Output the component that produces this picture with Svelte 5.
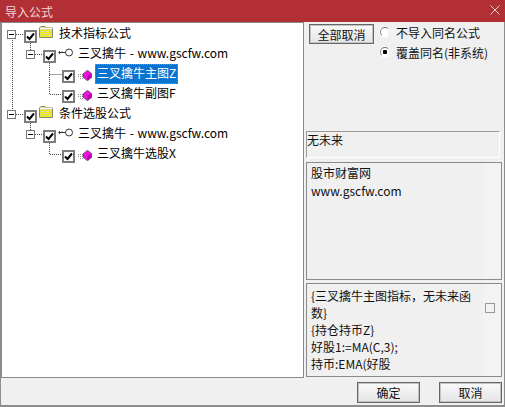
<script>
  const rows = [
    { depth: 0, kind: 'folder', label: '技术指标公式', expander: true },
    { depth: 1, kind: 'key', label: '三叉擒牛 - www.gscfw.com', expander: true },
    { depth: 2, kind: 'gem', label: '三叉擒牛主图Z', selected: true },
    { depth: 2, kind: 'gem', label: '三叉擒牛副图F' },
    { depth: 0, kind: 'folder', label: '条件选股公式', expander: true },
    { depth: 1, kind: 'key', label: '三叉擒牛 - www.gscfw.com', expander: true },
    { depth: 2, kind: 'gem', label: '三叉擒牛选股X' }
  ];
  let overwrite = $state(true);
</script>

<div class="window">
  <header class="titlebar">
    <span class="title">导入公式</span>
    <svg class="close" width="10" height="10" viewBox="0 0 10 10"><path d="M0.5 0.5 9.5 9.5M9.5 0.5 0.5 9.5" stroke="#e9cfd0" fill="none" /></svg>
  </header>

  <div class="main">
    <div class="tree">
      <svg class="lines" width="110" height="150" viewBox="0 0 110 150">
        <path d="M10.5 15V87M14 11.5H22M28.5 20V27M33 31.5H41M47.5 40V71.5H60M47.5 51.5H60M14 91.5H22M28.5 100V107M33 111.5H41M47.5 120V131.5H60" stroke="#444" stroke-dasharray="1 1" fill="none" />
      </svg>
      {#each rows as row}
        <div class="row depth{row.depth}">
          {#if row.expander}
            <span class="expander"><i></i></span>
          {/if}
          <span class="check">
            <svg width="9" height="9" viewBox="0 0 9 9"><path d="M1 4.5 3.5 7 8 1.5" stroke="#000" stroke-width="2" fill="none" /></svg>
          </span>
          {#if row.kind === 'folder'}
            <svg class="icon folder" width="14" height="12" viewBox="0 0 14 12">
              <defs>
                <pattern id="dither" width="2" height="2" patternUnits="userSpaceOnUse">
                  <rect width="2" height="2" fill="#f6f200" />
                  <rect width="1" height="1" fill="#d6d690" />
                  <rect x="1" y="1" width="1" height="1" fill="#d6d690" />
                </pattern>
              </defs>
              <path d="M0.5 11.5V2L2 0.5H6L7.5 2H13.5V11.5Z" fill="url(#dither)" stroke="#8a8a70" />
              <path d="M1 2.5H13" stroke="#fff" fill="none" />
            </svg>
          {:else if row.kind === 'key'}
            <svg class="icon key" width="15" height="9" viewBox="0 0 15 9">
              <circle cx="11" cy="4.5" r="3.5" fill="#fff" stroke="#333" />
              <path d="M0.5 4.5H7.5M1.5 3V6M4 3.5V4" stroke="#333" fill="none" />
            </svg>
          {:else}
            <svg class="icon gem" width="15" height="11" viewBox="0 0 15 11">
              <path d="M1 4.5H6M1 6.5H6M3 8.5H6" stroke="#888" stroke-dasharray="1 1" fill="none" />
              <path d="M10.5 0.2 15 4V7L10.5 10.8 6 7V4Z" fill="#f010e0" stroke="#503060" stroke-width="0.7" />
              <path d="M10.5 5.5 14.6 4V6.8L10.5 10.2Z" fill="#b000a8" />
            </svg>
          {/if}
          <span class="label" class:selected={row.selected}>{row.label}</span>
        </div>
      {/each}
    </div>

    <div class="side">
      <div class="options">
        <button class="btn all">全部取消</button>
        <div class="radios">
          <label class="radio"><input type="radio" name="same" checked={!overwrite} onchange={() => (overwrite = false)} /><span>不导入同名公式</span></label>
          <label class="radio"><input type="radio" name="same" checked={overwrite} onchange={() => (overwrite = true)} /><span>覆盖同名(非系统)</span></label>
        </div>
      </div>
      <div class="future">无未来</div>
      <div class="box info">
        <div class="text">
          <div>股市财富网</div>
          <div>www.gscfw.com</div>
        </div>
      </div>
      <div class="box code">
        <div class="text">
          <div>{'{'}三叉擒牛主图指标，无未来函数{'}'}</div>
          <div>{'{'}持仓持币Z{'}'}</div>
          <div>好股1:=MA(C,3);</div>
          <div>持币:EMA(好股</div>
        </div>
        <span class="small-check"></span>
      </div>
    </div>
  </div>

  <footer class="footer">
    <button class="btn ok">确定</button>
    <button class="btn cancel">取消</button>
  </footer>
</div>

<style>
  :global(body) {
    margin: 0;
    background: #f0f0f0;
  }
  .window {
    width: 505px;
    height: 407px;
    box-sizing: border-box;
    border: 1px solid #8d8d8d;
    border-top: none;
    border-bottom-width: 2px;
    background: #f0f0f0;
    font-family: "Noto Sans CJK SC", "Liberation Sans", sans-serif;
    font-size: 12px;
    color: #111;
    display: flex;
    flex-direction: column;
  }
  .titlebar {
    height: 22px;
    flex: none;
    margin: 0 -1px;
    background: #b12f35;
    display: flex;
    align-items: center;
    justify-content: space-between;
    padding: 0 5px;
    color: #f0d8d8;
  }
  .close {
    margin-top: -2px;
  }
  .main {
    height: 356px;
    flex: none;
    display: flex;
  }
  .tree {
    position: relative;
    width: 303px;
    flex: none;
    box-sizing: border-box;
    border: 1px solid #8a8a8a;
    background: #fff;
    padding-top: 1px;
  }
  .lines {
    position: absolute;
    left: 0;
    top: 0;
    pointer-events: none;
  }
  .row {
    position: relative;
    height: 20px;
    display: flex;
    align-items: center;
    color: #000;
  }
  .depth0 { padding-left: 5px; }
  .depth1 { padding-left: 24px; }
  .depth2 { padding-left: 60px; }
  .expander {
    width: 9px;
    height: 9px;
    box-sizing: border-box;
    border: 1px solid #777;
    background: #fff;
    margin-right: 8px;
    display: flex;
    align-items: center;
    justify-content: center;
  }
  .expander i {
    width: 5px;
    height: 1px;
    background: #000;
  }
  .check {
    width: 13px;
    height: 13px;
    flex: none;
    box-sizing: border-box;
    border: 2px solid #7d7d7d;
    background: #fff;
    align-self: flex-start;
    margin-top: 6px;
    display: flex;
    align-items: center;
    justify-content: center;
  }
  .icon {
    flex: none;
    align-self: flex-start;
    margin-left: 2px;
  }
  .folder { margin-top: 2px; }
  .key { margin-top: 4px; }
  .gem { margin-top: 6px; }
  .label {
    margin-left: 5px;
    line-height: 18px;
    padding-bottom: 2px;
    word-spacing: 1px;
  }
  .depth0 .label { margin-left: 6px; }
  .depth2 .label {
    margin-left: 3px;
    padding-left: 2px;
    padding-right: 2px;
  }
  .label.selected {
    background: #0a74d0;
    color: #fff;
    outline: 1px dotted #d08020;
    outline-offset: -1px;
  }
  .side {
    flex: 1;
    min-width: 0;
    display: flex;
    flex-direction: column;
  }
  .options {
    height: 109px;
    flex: none;
    display: flex;
    padding-left: 5px;
    gap: 6px;
  }
  .btn {
    font: inherit;
    color: #111;
    background: linear-gradient(#fafafa, #e4e4e4);
    border: 1px solid #666;
    box-shadow: inset 0 0 0 1px #c4c4c4;
    padding: 0;
  }
  .all {
    width: 65px;
    height: 20px;
    margin-top: 2px;
  }
  .radios {
    display: flex;
    flex-direction: column;
  }
  .radio {
    display: flex;
    align-items: center;
    height: 20px;
    gap: 6px;
  }
  .radio input {
    appearance: none;
    width: 10px;
    height: 10px;
    box-sizing: border-box;
    margin: 0;
    flex: none;
    border-radius: 50%;
    border: 1px solid;
    border-color: #777 #e8e8e8 #fff #888;
    background: #fff;
    box-shadow: 0 0 0 1px #f8f8f8;
  }
  .radio input:checked {
    background: radial-gradient(circle, #000 0 2px, #fff 2.5px);
  }
  .future {
    height: 27px;
    width: 194px;
    flex: none;
    box-sizing: border-box;
    border: 1px solid #9a9a9a;
    border-bottom-color: #fff;
    border-right-color: #fff;
    line-height: 16px;
    margin-left: 2px;
  }
  .box {
    box-sizing: border-box;
    width: 196px;
    flex: none;
    margin-left: 2px;
    border: 1px solid #8a8a8a;
    background: #f4f3f1;
    display: flex;
    align-items: flex-start;
  }
  .text {
    width: 176px;
    height: 100%;
    flex: none;
    box-sizing: border-box;
    background: #f0f0f0;
    padding: 0 8px 0 4px;
    overflow: hidden;
  }
  .info {
    height: 118px;
    margin-top: 4px;
    line-height: 18px;
  }
  .info .text {
    padding-top: 1px;
  }
  .code {
    height: 94px;
    margin-top: 3px;
    line-height: 17px;
  }
  .code .text {
    padding-top: 3px;
  }
  .small-check {
    width: 10px;
    height: 10px;
    box-sizing: border-box;
    border: 1px solid #999;
    margin: 19px 0 0 2px;
    flex: none;
  }
  .footer {
    flex: 1;
    display: flex;
    justify-content: flex-end;
    align-items: flex-start;
    gap: 19px;
    padding: 4px 2px 0 0;
  }
  .ok, .cancel {
    width: 63px;
    height: 21px;
  }
</style>
